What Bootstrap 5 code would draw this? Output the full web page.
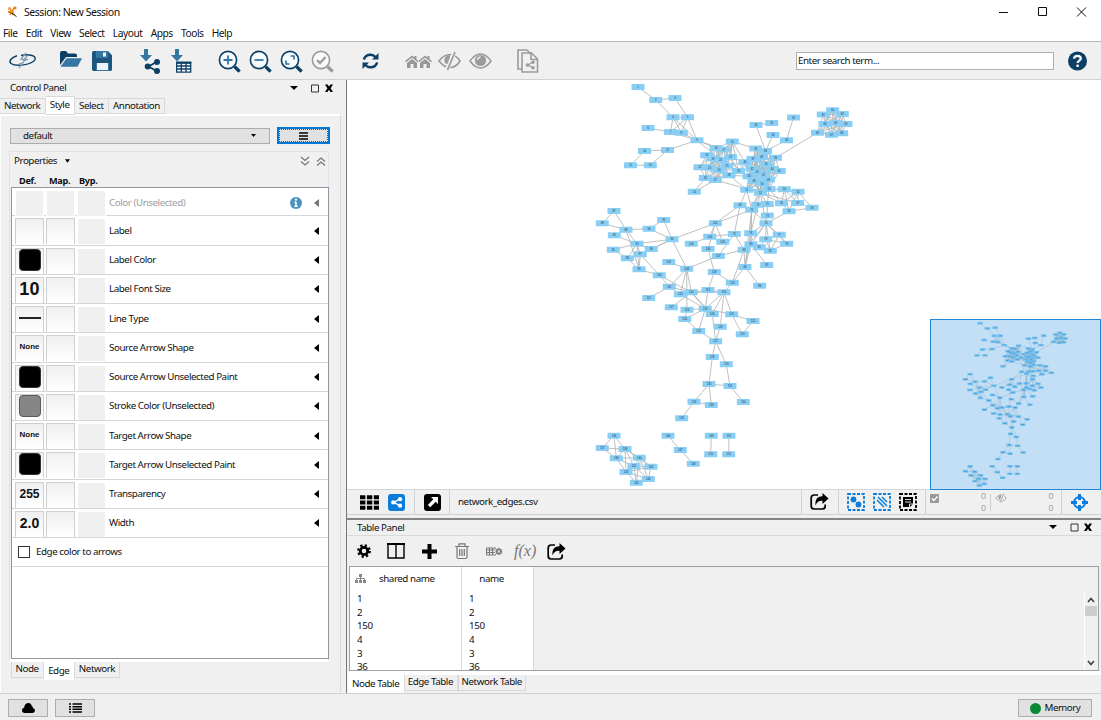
<!DOCTYPE html>
<html lang="en">
<head>
<meta charset="utf-8">
<meta name="viewport" content="width=device-width, initial-scale=1">
<title>Session: New Session</title>
<link href="https://cdn.jsdelivr.net/npm/bootstrap@5.3.0/dist/css/bootstrap.min.css" rel="stylesheet">
<style>
:root{--face:#f0f0f0;--line:#d9d9d9;--navy:#0b3f66;--steel:#3676a3;--sky:#0a7ddb}
html,body{height:100%;overflow:hidden}
body{font:9.8px/14px "Noto Sans","Open Sans",sans-serif;letter-spacing:-.45px;color:#111;background:var(--face);width:1101px;height:720px}
svg{display:block;flex:none;overflow:visible}
.title-row{height:24px;padding:0 14px 0 7px}
.title-row span{font-size:10.5px;margin-left:6px}
.menu-row{height:18px;border-bottom:1px solid #b9b9b9;padding:1px 0 0 3px;gap:8.2px;font-size:10.2px}
.tool-row{height:38px;border-bottom:1px solid #d0d0d0;padding:1px 0 0 7.5px;gap:17px}
.slot{width:31px;display:flex;justify-content:center}
.search-box{width:258px;height:18px;border:1px solid #a9aeb5;background:#fff;padding:0 1px;line-height:16px;margin-right:14px}
.search-wrap{margin-right:14px}
.work{height:613px}
.side{width:347px;border-right:1px solid #777;padding-right:5px}
.side-head{height:16px;padding:0 7px 0 10px}
.tabs{height:18px}
.tabs span{border:1px solid var(--line);border-left:0;height:16px;padding:0 4.5px 0 4px}
.tabs .on{background:#fff;height:19px;margin-bottom:-1px;padding-top:1px}
.side-body{border-top:2px solid #fff;border-left:1px solid #fff;border-right:1px solid var(--line);height:578px;padding:11px 10px 0 9px}
.combo{width:260px;height:16px;line-height:13px;background:#e1e1e1;border:1px solid #adadad;padding:0 12px}
.menu-btn{width:53px;height:17px;border:2px solid #0078d7;background:#e1e1e1;outline:1px dotted #555;outline-offset:-3px}
.props{margin:7px 0 0 -1px;border:1px solid #e2e2e2;height:511px;border-bottom:3px solid #fff;padding:0 0 0 1px;width:320px}
.props-head{height:18px;padding:0 2px 0 3px}
.cols{height:17px;font-weight:700;font-size:9.2px;padding:4px 0 0 8px;letter-spacing:-.3px}
.cols span{width:30px}
.plist{border:1px solid #8f96a1;background:#fff;height:472px;width:318px}
.prow{height:29.25px;border-bottom:1px solid #d6d6d6;padding:2px 9px 0 3px}
.prow:first-child{height:28.4px}
.cell{height:26px;width:29px;margin-right:2px;padding-bottom:3px;border:1px solid #cfcfcf;border-bottom:0;background:linear-gradient(#f0f0f0,#fff);display:flex;align-items:center;justify-content:center;font-family:"Liberation Sans",sans-serif;font-weight:700;letter-spacing:0}
.cell.off{border-color:#fff;background:var(--face)}
.cell i{width:22px;height:22px;flex:none;border-radius:4px;border:1px solid #333;background:#000}
.cell i.grey{background:#868686;border-color:#5a5a5a}
.cell hr{width:22px;height:2px;background:#222;margin:0;border:0;opacity:1}
.t10{font-size:18px;letter-spacing:.2px}.t8{font-size:8px}.t13{font-size:12px}.t14{font-size:14px}
.pbody{height:27px;padding-bottom:2px}
.pname{margin-left:1px}
.dim{color:#a0a0a0}
.erow{padding-top:0;padding-bottom:1px}
.tick{width:12px;height:12px;border:1px solid #333;background:#fff;margin:0 6px 0 3px}
.btabs{padding-left:1px}
.btabs span{border:1px solid var(--line);border-top:0;height:16px;padding:0 4px 0 3.5px}
.btabs .on{background:#fff;border-color:#fff;height:18px;padding-top:2px}
.canvas-net{height:410px;background:#fff;position:relative;border-bottom:1px solid #d6d6d6}
.bird{position:absolute;right:0;top:239px;width:171px;height:171px;border:1px solid #2186d6;background:#fff;overflow:hidden}
.net-row{height:25px;border-bottom:1px solid #d0d0d0}
.net-row>div{height:25px;border-right:1px solid #cfcfcf;display:flex;align-items:center;padding-bottom:1px}
.nr-a{width:68px}.nr-b{width:35px}.nr-c{width:136px}.net-row>.nr-d{width:39px;border-right:0;padding-right:4px}
.counts{color:#a0a0a0;font:9px/12px "Liberation Sans",sans-serif}
.vline{width:1px;height:17px;background:#ccc;margin:4px 4px 0}
.tpanel{margin-top:3px;border-top:2px solid #848484;flex:1}
.tp-head{height:16px;padding:0 8px 0 10px;border-bottom:1px solid var(--line)}
.tp-tools{height:30px;padding-left:10px}
.i2{margin-left:16px}.i3{margin-left:17px}.i4{margin-left:18px}.i5{margin-left:17px}.i6{margin-left:11px}
.fx{font:italic 16px/16px "Liberation Serif",serif;color:#777;letter-spacing:0;margin-left:11px}
.tbox{margin:0 2px;height:105px;border:1px solid #9a9fa8;display:flex;overflow:hidden}
.tcol{background:#fff;border-right:1px solid var(--line)}
.tcol .th{height:25px;line-height:23px}
.tcol p{margin:0;height:13.7px;line-height:14px;padding-left:7px;letter-spacing:-.4px;font-size:9.8px}
#c1{width:112px}#c2{width:72px}#c1 .th{gap:13px;padding:0 0 2px 5px}#c2 .th{padding-right:12px}
.sbar{width:14px;margin:26px 0 0;background:#f0f0f0;border-left:1px solid #fff;height:77px}
.sbar b{display:block;background:#cdcdcd;height:10px;width:12px}
.dn{margin-top:40px}
.ttabs{border-top:4px solid #fff;height:19px;margin-left:1px}
.ttabs span{border:1px solid var(--line);border-top:0;height:16px;padding:0 3.5px 0 3px}
.ttabs .on{background:#fff;border-color:#fff;height:18px;padding-top:2px}
.status{height:27px;border-top:1px solid #d0d0d0;padding:5px 9px 0 8px}
.flatbtn{border:1px solid #adadad;background:#e1e1e1;height:18px;width:40px;display:flex;align-items:center;justify-content:center;margin-right:7px}
.mem{width:74px}
</style>
</head>
<body>
<svg width="0" height="0" class="position-absolute">
<defs>
<g id="mag"><circle cx="12" cy="12" r="8.600" fill="#f8fbfd" stroke-width="1.600"/><path d="M18.600 18.600l5 5" stroke-width="3.400"/></g>
<g id="share"><path d="M12 3L4 7.500l8 4.500" fill="none" stroke="currentColor" stroke-width="1.800"/><circle cx="12.500" cy="3" r="3"/><circle cx="3.200" cy="7.500" r="3"/><circle cx="12.500" cy="12" r="3"/></g>
<g id="export"><path d="M8 2H4.500Q1.200 2 1.200 5v8q0 3 3 3h8q3 0 3-3v-1.500" fill="none" stroke="#000" stroke-width="1.700"/><path d="M18.500 5.500L12.500 0v3.200C7.500 3.200 5 6 5.500 12.500 7 9 8.700 7.800 12.500 7.800V11z"/></g>
<g id="eyeoff"><path d="M1 8Q6 1.500 12 1.500t10 6.500q-4 6.500-10 6.500T1 8z" fill="none" stroke="#9a9a9a" stroke-width="1.600"/><path d="M12 2a5.500 5.500 0 0 0-5 8l5 3z" fill="#9a9a9a"/><path d="M16.500-1L9 17" stroke="#f0f0f0" stroke-width="4"/><path d="M17-1L9.500 17" stroke="#9a9a9a" stroke-width="1.700"/></g>
<path id="cross" d="M1 0.500h2.500L5 2.500 6.500 .5H9L6.600 4.300 9 8H6.500L5 5.800 3.500 8H1l2.400-3.700z"/>
<g id="graph"></g>
</defs>
</svg>

<header class="bg-white">
  <div class="title-row d-flex align-items-center">
    <svg width="11" height="12" viewBox="0 0 11 12"><path d="M2 2l3 3M8 1L5 5M1 6l4-1 3 5M5 5l-2 4" stroke="#ea8a1d" stroke-width="1.400"/><circle cx="2.500" cy="2.500" r="1.500" fill="#f29a2e"/><circle cx="8" cy="2" r="1.600" fill="#e87b12"/><circle cx="5" cy="5.500" r="1.800" fill="#ef9324"/><path d="M7 8l2.500 3" stroke="#4a4a55"/></svg>
    <span>Session: New Session</span>
    <svg class="ms-auto" width="88" height="12" viewBox="0 0 88 12" fill="none" stroke="#111"><path d="M0 6.500h9"/><path d="M39.500 1.500h8v8h-8z"/><path d="M78 1.500l9 9M87 1.500l-9 9"/></svg>
  </div>
  <nav class="menu-row d-flex align-items-center"><span>File</span><span>Edit</span><span>View</span><span>Select</span><span>Layout</span><span>Apps</span><span>Tools</span><span>Help</span></nav>
</header>

<div class="tool-row d-flex align-items-center">
  <div class="slot"><svg width="28" height="16" viewBox="0 0 28 16" fill="none" stroke="#0b3f66"><path d="M8 2.700C2 4.500-.5 8.500 2 10.500c5 3.500 21 1.500 24-4C28 2 18 1 12 2.500" stroke-width="1.500"/><path d="M17 0l-5 6 4 1-6 8M18 3l-3 4 4-.5M13 10l-3 1" stroke="#7e9db5" stroke-width="1.300"/></svg></div>
  <div class="d-flex">
    <div class="slot"><svg width="22" height="17" viewBox="0 0 22 17"><path d="M0 14V2q0-2 2-2h4l2 2.500h7q2 0 2 2V6H6z" fill="#0b3f66"/><path d="M6.500 7.200H22l-4.500 8.600H.5z" fill="#3676a3"/></svg></div>
    <div class="slot"><svg width="20" height="20" viewBox="0 0 20 20"><path d="M2 0h14l4 4v14q0 2-2 2H2q-2 0-2-2V2q0-2 2-2z" fill="#3676a3"/><path d="M0 12V2q0-2 2-2h2v7h12V1l4 4v13q0 2-2 2h-1v-8H4v8H2q-2 0-2-2z" fill="#0b3f66" opacity=".6"/><path d="M5 12h11v7H5z" fill="#eef3f7"/><path d="M11 1.500h3v4h-3z" fill="#eef3f7"/></svg></div>
  </div>
  <div class="d-flex">
    <div class="slot"><svg width="20" height="25" viewBox="0 0 20 25"><path d="M4 0h4v6h4l-6 6.500L0 6h4z" fill="#3676a3"/><g transform="translate(4.500 10)" fill="#0b3f66" color="#0b3f66"><use href="#share"/></g></svg></div>
    <div class="slot"><svg width="21" height="25" viewBox="0 0 21 25"><path d="M4 0h4v6h4l-6 6.500L0 6h4z" fill="#3676a3"/><path d="M5.700 14v9.200h14V14zM5.700 17h14m-14 3h14M10.300 14v9m4.700-9v9" fill="#fff" stroke="#0b3f66" stroke-width="1.300"/><path d="M5 12.500h15.400v2H5z" fill="#0b3f66"/></svg></div>
  </div>
  <div class="d-flex">
    <div class="slot"><svg width="26" height="26" viewBox="0 0 26 26" stroke="#0b3f66"><use href="#mag"/><path d="M12 7.500v9M7.500 12h9" stroke="#3676a3" stroke-width="1.800"/></svg></div>
    <div class="slot"><svg width="26" height="26" viewBox="0 0 26 26" stroke="#0b3f66"><use href="#mag"/><path d="M7.500 12h9" stroke="#3676a3" stroke-width="1.800"/></svg></div>
    <div class="slot"><svg width="26" height="26" viewBox="0 0 26 26" stroke="#0b3f66" fill="none"><use href="#mag"/><path d="M12.500 8H16v3.500M11.500 16H8v-3.500" stroke="#3676a3" stroke-width="1.700"/></svg></div>
    <div class="slot"><svg width="26" height="26" viewBox="0 0 26 26" stroke="#9b9b9b" fill="none"><use href="#mag"/><path d="M8 12l3 3 5.500-6" stroke-width="2.300"/></svg></div>
  </div>
  <div class="slot"><svg width="17" height="16" viewBox="0 0 17 16" fill="none" stroke="#0b3f66" stroke-width="2.400"><path d="M1.800 6.500C3 3 6 1.500 9 1.700c2 .2 3.500 1 5 2.800M15.200 9.500C14 13 11 14.500 8 14.300c-2-.2-3.500-1-5-2.800"/><path d="M16.500 0v6.500H10zM.5 16V9.500H7z" fill="#0b3f66" stroke="none"/></svg></div>
  <div class="d-flex align-items-center">
    <div class="slot"><svg width="27" height="13" viewBox="0 0 27 13" fill="#979797"><path d="M7 .5l2.500 2V1h2v3.200L13.500 6l-1 1.200L7 2.500 1 7.200 0 6z"/><path d="M7 4l5 4v5H8.500V9h-3v4H2V8z"/><path d="M20 .5l2.500 2V1h2v3.200L27 6l-1 1.200-6-4.700-5.500 4.700-1-1.200z"/><path d="M20 4l5 4v5h-3.500V9h-3v4H15V8z"/></svg></div>
    <div class="slot"><svg width="23" height="16" viewBox="0 0 23 16"><use href="#eyeoff"/></svg></div>
    <div class="slot"><svg width="23" height="16" viewBox="0 0 23 16"><path d="M1 8Q6 1 11.500 1T22 8q-5 7-10.500 7T1 8z" fill="none" stroke="#9a9a9a" stroke-width="1.600"/><circle cx="11.500" cy="7.500" r="5.600" fill="#9a9a9a"/><path d="M8.500 7a3.500 3.500 0 0 1 3-3" stroke="#f0f0f0" stroke-width="1.300" fill="none"/></svg></div>
  </div>
  <div class="slot"><svg width="22" height="24" viewBox="0 0 22 24" fill="none" stroke="#9b9b9b" stroke-width="1.600"><path d="M5 20H1V1h9l4 4"/><path d="M5 4h9.500l6 6v13H5zM14 4v6.500h6"/><g transform="translate(8.500 11.500) scale(.6)" fill="#9b9b9b" color="#9b9b9b" stroke="none"><use href="#share"/></g></svg></div>
  <div class="search-wrap d-flex align-items-center ms-auto">
    <div class="search-box">Enter search term...</div>
    <svg width="19" height="20" viewBox="0 0 19 20"><circle cx="9.500" cy="10" r="9.500" fill="#0b3f66"/><path d="M6 7.600Q6.300 4.800 9.500 4.800t3.300 2.700c0 2-3.200 2.200-3.200 4.600" fill="none" stroke="#fff" stroke-width="2.300"/><circle cx="9.600" cy="14.800" r="1.400" fill="#fff"/></svg>
  </div>
</div>

<main class="work d-flex">
  <aside class="side">
    <div class="side-head d-flex align-items-center"><span>Control Panel</span>
      <svg class="ms-auto" width="44" height="9" viewBox="0 0 44 9"><path d="M0 2h8L4 6z"/><path d="M21.500 1h7v7h-7z" fill="none" stroke="#333"/><use href="#cross" x="34"/></svg></div>
    <div class="tabs d-flex align-items-end"><span>Network</span><span class="on">Style</span><span>Select</span><span>Annotation</span></div>
    <div class="side-body">
      <div class="d-flex align-items-center justify-content-between">
        <div class="combo d-flex align-items-center justify-content-between"><span>default</span><svg width="6" height="4" viewBox="0 0 6 4"><path d="M0 0h5L2.500 3z"/></svg></div>
        <div class="menu-btn d-flex align-items-center justify-content-center"><svg width="9" height="8" viewBox="0 0 9 8"><path d="M0 1h9M0 4h9M0 7h9" stroke="#000" stroke-width="1.500"/></svg></div>
      </div>
      <div class="props">
        <div class="props-head d-flex align-items-center"><span>Properties</span><svg class="ms-2" width="5" height="4" viewBox="0 0 6 4"><path d="M0 0h6L3 4z"/></svg>
          <svg class="ms-auto" width="26" height="9" viewBox="0 0 26 9" fill="none" stroke="#777" stroke-width="1.200"><path d="M1 0l4 3.500L9 0M1 4.500L5 8l4-3.500M17 4.500L21 1l4 3.500M17 8.500L21 5l4 3.500"/></svg></div>
        <div class="cols d-flex"><span>Def.</span><span>Map.</span><span>Byp.</span></div>
        <div class="plist" id="plist"></div>
      </div>
      <div class="btabs d-flex"><span>Node</span><span class="on">Edge</span><span>Network</span></div>
    </div>
  </aside>

  <section class="flex-grow-1 d-flex flex-column">
    <div class="canvas-net">
      <svg width="754" height="409" viewBox="347 80 754 409"><use href="#graph"/></svg>
      <div class="bird"><svg width="169" height="169" viewBox="0 0 169 169"><g transform="translate(-212.600 -32.400) scale(.41)"><use href="#graph"/></g><path d="M0 0h169v169H0z" fill="#2288dd" opacity=".27"/></svg></div>
    </div>
    <div class="net-row d-flex">
      <div class="nr-a"><svg width="68" height="20" viewBox="0 0 68 20"><path d="M13 5.300h19M13 10.500h19M13 15.700h19" stroke="#000" stroke-width="4" stroke-dasharray="5.400 1.500"/><rect x="41" y="2" width="17" height="17" rx="3" fill="#0a7ddb"/><g transform="translate(44 5) scale(.72)" fill="#fff" color="#fff"><use href="#share"/></g></svg></div>
      <div class="nr-b"><svg width="34" height="20" viewBox="0 0 34 20"><rect x="9" y="2" width="17" height="17" rx="3"/><path d="M16 5h7v7l-2.300-2.300-5.500 5.500-2.300-2.300L18.300 7.300z" fill="#fff"/></svg></div>
      <div class="flex-grow-1 ps-2"><span>network_edges.csv</span></div>
      <div class="px-2"><svg width="20" height="18" viewBox="0 0 20 18"><use href="#export"/></svg></div>
      <div class="px-2 gap-2">
        <svg width="18" height="18" viewBox="0 0 18 18" fill="#0a7ddb"><rect x="1" y="1" width="16" height="16" fill="none" stroke="#0a7ddb" stroke-width="1.800" stroke-dasharray="3 1.500"/><circle cx="6.500" cy="6.500" r="2.900"/><circle cx="11.500" cy="11.500" r="2.900"/></svg>
        <svg width="18" height="18" viewBox="0 0 18 18"><rect x="1" y="1" width="16" height="16" fill="none" stroke="#0a7ddb" stroke-width="1.800" stroke-dasharray="3 1.500"/><path d="M4 7l7 7M5 4l9 9M9 4l5 5" stroke="#0a7ddb" stroke-width="1.500"/></svg>
        <svg width="18" height="18" viewBox="0 0 18 18"><rect x="1" y="1" width="16" height="16" fill="none" stroke="#000" stroke-width="1.800" stroke-dasharray="3 1.500"/><path d="M4 4h10v7l-3 3H4z"/><path d="M6 6.500h6M6 9h6M10.500 14v-3H14" stroke="#ddd" fill="none"/></svg>
      </div>
      <div class="nr-c counts d-flex align-items-start">
        <svg class="mt-1 ms-1" width="9" height="9" viewBox="0 0 9 9"><rect width="9" height="9" rx="1" fill="#999"/><path d="M1.800 4.500l2 2L7.500 2.500" fill="none" stroke="#fff" stroke-width="1.400"/></svg>
        <span class="ms-auto text-end">0<br>0</span><span class="vline"></span>
        <svg class="mt-1" width="12" height="8" viewBox="0 0 23 16"><use href="#eyeoff"/></svg>
        <span class="ms-auto me-2 text-end">0<br>0</span>
      </div>
      <div class="nr-d justify-content-center"><svg width="17" height="17" viewBox="0 0 17 17"><circle cx="8.500" cy="8.500" r="5.500" fill="none" stroke="#0a7ddb" stroke-width="2"/><path d="M8.500 0v6M8.500 11v6M0 8.500h6M11 8.500h6" stroke="#0a7ddb" stroke-width="3"/></svg></div>
    </div>
    <div class="tpanel">
      <div class="tp-head d-flex align-items-center"><span>Table Panel</span><svg class="ms-auto" width="44" height="9" viewBox="0 0 44 9"><path d="M0 2h8L4 6z"/><path d="M22 1h7v7h-7z" fill="none" stroke="#333"/><use href="#cross" x="34"/></svg></div>
      <div class="tp-tools d-flex align-items-center">
        <svg width="14" height="14" viewBox="0 0 14 14"><circle cx="7" cy="7" r="3.700" fill="none" stroke="#000" stroke-width="2.800"/><circle cx="7" cy="7" r="5.700" fill="none" stroke="#000" stroke-width="2.400" stroke-dasharray="2.200 2.280"/></svg>
        <svg class="i2" width="18" height="16" viewBox="0 0 18 16"><path d="M1 1h16v14H1zM9 1v14" fill="none" stroke="#000" stroke-width="1.400"/><path d="M0 0h18v2H0z"/></svg>
        <svg class="i3" width="15" height="15" viewBox="0 0 15 15"><path d="M7.500 0v15M0 7.500h15" stroke="#000" stroke-width="4"/></svg>
        <svg class="i4" width="14" height="16" viewBox="0 0 14 16" fill="none" stroke="#777" stroke-width="1.200"><path d="M0 3.500h14M2 3.500V14q0 1.500 1.500 1.500h7Q12 15.500 12 14V3.500M4 3.500V.8h6v2.700M4.700 6v7M7 6v7M9.300 6v7"/></svg>
        <svg class="i5" width="17" height="9" viewBox="0 0 17 9" fill="none" stroke="#777"><path d="M.5 1h9v7h-9zM.5 3h9M.5 5.500h9M3.500 1v7M6.500 1v7"/><circle cx="12.800" cy="4.500" r="3.800" fill="#777" stroke="#f0f0f0"/><path d="M11.500 3.200l2.600 2.600M14.100 3.200l-2.600 2.600" stroke="#fff"/></svg>
        <span class="fx">f(x)</span>
        <svg class="i6" width="19" height="17" viewBox="0 0 19 17"><use href="#export"/></svg>
      </div>
      <div class="tbox">
        <div class="tcol" id="c1"><div class="th d-flex align-items-center"><svg width="11" height="9" viewBox="0 0 11 9" fill="#888"><path d="M4 0h3v3H4zM0 6h3v3H0zM4 6h3v3H4zM8 6h3v3H8z"/><path d="M5.500 2v4M1.500 6V4.500h8V6" fill="none" stroke="#888"/></svg><span>shared name</span></div></div>
        <div class="tcol" id="c2"><div class="th text-center">name</div></div>
        <div class="sbar ms-auto"><svg width="12" height="13" viewBox="0 0 12 13" fill="none" stroke="#444" stroke-width="1.700"><path d="M3 9l3-3.500L9 9"/></svg><b></b><svg class="dn" width="12" height="13" viewBox="0 0 12 13" fill="none" stroke="#444" stroke-width="1.700"><path d="M3 5l3 3.500L9 5"/></svg></div>
      </div>
      <div class="ttabs d-flex"><span class="on">Node Table</span><span>Edge Table</span><span>Network Table</span></div>
    </div>
  </section>
</main>

<footer class="status d-flex">
  <div class="flatbtn"><svg width="13" height="10" viewBox="0 0 13 10"><path d="M3 10Q0 10 0 7.300 0 5 2.300 4.600 2.300.5 6 0q3-.2 3.800 3Q11 3.500 11 5q2 .5 2 2.500T10.500 10z"/></svg></div>
  <div class="flatbtn"><svg width="13" height="10" viewBox="0 0 13 10"><path d="M0 1h2M0 3.700h2M0 6.300h2M0 9h2M3.500 1H13M3.500 3.700H13M3.500 6.300H13M3.500 9H13" stroke="#000" stroke-width="1.500"/></svg></div>
  <div class="flatbtn mem ms-auto me-0"><svg width="11" height="11" viewBox="0 0 11 11"><circle cx="5.500" cy="5.500" r="5.500" fill="#0a8a34"/></svg><span class="ms-1">Memory</span></div>
</footer>
<script src="https://cdn.jsdelivr.net/npm/bootstrap@5.3.0/dist/js/bootstrap.bundle.min.js"></script>
<script>
// Visual property rows: name, default-cell content
const black='<i></i>', none='<span class="t8">None</span>';
const props=[['Color (Unselected)',null],['Label',''],['Label Color',black],['Label Font Size','<span class="t10">10</span>'],['Line Type','<hr>'],['Source Arrow Shape',none],['Source Arrow Unselected Paint',black],['Stroke Color (Unselected)','<i class="grey"></i>'],['Target Arrow Shape',none],['Target Arrow Unselected Paint',black],['Transparency','<span class="t13">255</span>'],['Width','<span class="t14">2.0</span>']];
const info='<svg class="ms-auto me-2" width="12" height="12" viewBox="0 0 12 12"><circle cx="6" cy="6" r="6" fill="#4b93bd"/><path d="M6 5v4M4.500 9.300h3.200M4.500 5.300H6" stroke="#fff" stroke-width="1.500"/><circle cx="6" cy="2.700" r="1.100" fill="#fff"/></svg>';
document.getElementById('plist').innerHTML=props.map(([n,d])=>{
  const off=d===null, c=off?'cell off':'cell';
  return `<div class="prow d-flex align-items-start"><div class="${c}">${d||''}</div><div class="${c}"></div><div class="cell off"></div><div class="pbody d-flex align-items-center flex-grow-1"><span class="pname${off?' dim':''}">${n}</span>${off?info:''}<svg class="${off?'ms-1':'ms-auto'}" width="5" height="8" viewBox="0 0 5 8"><path d="M5 0v8L0 4z" fill="${off?'#777':'#000'}"/></svg></div></div>`}).join('')+
  '<div class="prow erow d-flex align-items-center"><span class="tick"></span><span>Edge color to arrows</span></div>';

for(const id of ['c1','c2']) document.getElementById(id).insertAdjacentHTML('beforeend',[1,2,150,4,3,36].map(v=>`<p>${v}</p>`).join(''));

// Network: node centres and edges between node indexes
const P=[638,87,655.7,100,675,98,673,117.3,687.5,117.3,648,128,670.5,132,681.3,132.7,697,140.3,644.5,151,667.5,150,630.5,165.3,650.3,165.3,694.3,191.7,
732.3,141.5,716,148,723.7,149.5,706.7,155.3,713,158.5,720.5,160,730.5,157,700,167.3,709.5,167.5,719,170,727,165.7,705.3,178,715.3,180,729,175.3,738.5,171,
756,125,771.7,123,793.5,117.5,773,135,786.5,140.3,755.7,148.5,765.5,151,753,159,761.5,157.3,775.5,157.8,745,162.3,766.3,164.3,752,168.5,757,171.7,772,169,779.3,171,749,176.3,763.5,175,754,181,768.5,179.5,762,183.5,746.7,189.7,760.3,192.7,769,189,784.3,189.3,798,191.7,781.5,203.3,797.7,203,789,211.3,812,207.7,
832.7,110.3,823.3,114.5,842.3,114,825,124,835.5,123,846,124,817.5,132.7,831.5,134.7,841.7,133.3,
740,205.3,757.7,204.7,767.3,204,751.7,209.7,767.3,215.5,766,223.3,734.3,234,750.7,233.3,779.3,234.7,765.7,239.3,786.7,243.7,751,244.3,759.3,247.3,770.3,250.7,744,249.7,745,267,766.7,265,759.7,285.7,
614,211,602.3,223.3,626,229.7,649,228.7,663.7,220,614.3,235.3,637,243.7,672,239.3,613.3,249.7,651.3,249,640.3,254.3,627.3,258.3,639,269.3,659.3,275.3,668.7,262,715.3,223.3,709.7,236.7,691.3,243.7,722.7,241.7,708,249,718.3,256,686.7,268.7,714.3,272,732.3,282.7,669.3,286.7,648.7,298,680.3,294.3,691.3,292.3,708,290,724,292.3,671.3,307.3,687,309.7,705.3,308.7,712.3,314,731.7,314.3,753,321,742.3,334.3,684.7,319,698.7,331,720.3,326.7,715.7,341.3,
712.3,357,726.3,364.3,709,384,730,386,694,401.7,711.3,405,743.3,402,681.7,418.3,
614,435.7,602.3,448,625,449,616.3,458.3,639.3,457.7,634,466,651,466.7,626,472,648.3,479,636.3,482.7,668,435.7,680.3,450,693.3,463.7,711.3,435.7,710.7,454.3,729,435.7,728.7,454.3];
const E=('0-1 1-2 1-3 2-4 3-4 3-6 3-7 4-6 4-7 3-8 4-8 5-6 7-8 6-8 8-10 9-10 9-11 11-12 12-10 8-16 8-15 8-19 25-13 26-13 14-20 14-15 14-34 14-39 '+
'29-35 29-30 32-35 33-35 31-33 38-65 52-53 52-54 52-55 51-55 53-54 53-55 53-56 54-56 54-57 54-58 54-55 57-58 51-56 55-57 53-57 '+
'28-39 28-36 24-39 27-50 27-45 20-39 26-51 28-45 57-73 50-68 50-71 51-70 51-69 51-71 51-73 49-71 52-70 68-74 68-101 71-101 71-75 71-79 69-75 73-71 73-75 73-77 73-76 73-79 73-82 73-78 73-81 76-77 76-78 77-78 77-80 77-81 76-81 78-81 79-82 79-80 80-81 75-79 75-83 79-83 82-83 79-84 83-85 83-109 82-109 71-83 70-72 72-73 '+
'82-106 74-102 74-106 74-82 101-102 101-104 102-103 102-104 101-93 101-105 105-108 106-107 108-109 108-114 109-115 '+
'86-87 86-88 87-88 88-89 89-93 90-89 90-93 88-92 91-92 88-98 92-93 95-92 95-93 96-93 94-97 94-92 97-92 97-96 92-98 92-96 96-98 98-99 96-99 97-98 99-110 99-113 93-107 100-107 107-110 107-112 107-113 107-117 110-111 110-113 112-113 113-114 114-115 113-115 113-116 113-118 112-118 113-119 110-112 115-118 114-118 117-118 115-119 115-120 118-119 118-120 118-123 118-124 117-123 115-125 119-126 123-124 124-126 125-126 120-121 120-122 121-122 126-127 126-128 127-129 128-130 129-130 129-131 129-132 131-132 131-134 130-133 '+
'135-136 135-137 135-138 136-137 136-138 137-138 137-139 137-140 137-142 137-141 138-139 138-140 138-142 139-140 139-141 139-144 139-143 140-141 140-142 140-143 140-144 141-142 141-143 142-143 142-144 143-144 145-146 146-147 148-149 150-151').split(' ').map(e=>e.split('-').map(Number));
const mesh=(a,b,m)=>{for(let i=a;i<=b;i++)for(let j=i+1;j<=b;j++)if((i*3+j*5)%m===0)E.push([i,j])};
mesh(14,28,2);mesh(34,52,2);mesh(59,67,1);
const edges=E.map(([a,b])=>`M${P[2*a]} ${P[2*a+1]}L${P[2*b]} ${P[2*b+1]}`).join('');
let nodes='', labels='';
for(let i=0;i<P.length/2;i++){
  nodes+=`<rect x="${P[2*i]-6.5}" y="${P[2*i+1]-3}" width="13" height="6" rx=".4"/>`;
  labels+=`<text x="${P[2*i]}" y="${P[2*i+1]+1}">${i+1}</text>`;
}
document.getElementById('graph').innerHTML=`<path d="${edges}" stroke="#b0b0b0" stroke-width=".8" fill="none"/><g fill="#89cff5">${nodes}</g><g font-family="Liberation Sans,sans-serif" font-size="2.8" letter-spacing="0" text-anchor="middle" fill="#234">${labels}</g>`;
</script>
</body>
</html>
